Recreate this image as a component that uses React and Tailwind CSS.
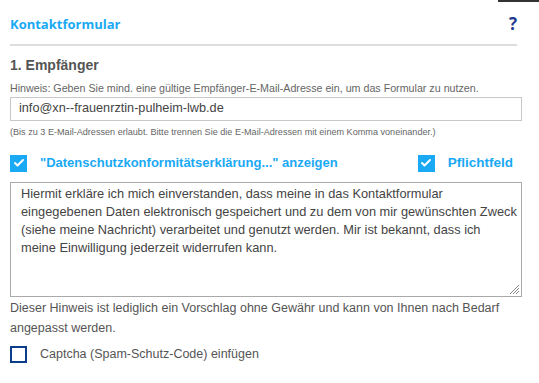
import { Check } from "lucide-react";

function Box({ checked }) {
  if (checked) {
    return (
      <span className="flex h-[17px] w-[17px] shrink-0 items-center justify-center bg-[#1aa9f5]">
        <Check className="h-3 w-3 text-white" strokeWidth={4} />
      </span>
    );
  }
  return <span className="h-[17px] w-[17px] shrink-0 border-2 border-[#0b3d8c] bg-white" />;
}

export default function App() {
  return (
    <div className="relative min-h-screen bg-white px-[10px] pt-[14px] font-['Liberation_Sans',Arial,sans-serif] text-[#555]">
      <div className="absolute right-0 top-0 h-[2px] w-[41px] bg-[#333]" />
      <div className="mr-[12px] flex items-center justify-between border-b-2 border-[#dddddd] pb-[10px]">
        <h1 className="font-['Open_Sans',sans-serif] text-[13px] font-bold leading-[20px] text-[#1aa9f5]">
          Kontaktformular
        </h1>
        <span className="font-['Open_Sans',sans-serif] text-[17px] font-bold leading-[20px] text-[#1b3c8c]">?</span>
      </div>

      <h2 className="mt-[11px] text-[14px] font-bold leading-[16px] text-[#555]">1. Empfänger</h2>
      <p className="mt-[8px] text-[10.7px] leading-[14px] text-[#666]">
        Hinweis: Geben Sie mind. eine gültige Empfänger-E-Mail-Adresse ein, um das Formular zu nutzen.
      </p>
      <div className="mr-[7px] mt-[2px] flex h-[24px] items-center border border-[#c8c8c8] px-[8px] text-[12.7px] text-[#444]">
        info@xn--frauenrztin-pulheim-lwb.de
      </div>
      <p className="mt-[5px] text-[9.1px] leading-[12px] text-[#666]">
        (Bis zu 3 E-Mail-Adressen erlaubt. Bitte trennen Sie die E-Mail-Adressen mit einem Komma voneinander.)
      </p>

      <div className="mt-[15px] flex items-center text-[13px] font-bold text-[#1aa9f5]">
        <div className="flex items-center gap-[13px]">
          <Box checked />
          <span>"Datenschutzkonformitätserklärung..." anzeigen</span>
        </div>
        <div className="ml-[80px] flex items-center gap-[13px]">
          <Box checked />
          <span className="text-[13.5px]">Pflichtfeld</span>
        </div>
      </div>

      <div className="relative mr-[7px] mt-[9px] h-[115px] whitespace-nowrap border border-[#aaa] px-[10px] pt-[2px] text-[12.8px] leading-[18px] text-[#444]">
        Hiermit erkläre ich mich einverstanden, dass meine in das Kontaktformular
        <br />
        eingegebenen Daten elektronisch gespeichert und zu dem von mir gewünschten Zweck
        <br />
        (siehe meine Nachricht) verarbeitet und genutzt werden. Mir ist bekannt, dass ich
        <br />
        meine Einwilligung jederzeit widerrufen kann.
        <svg className="absolute bottom-[1px] right-[1px]" width="12" height="12" viewBox="0 0 12 12">
          <path d="M11 2L2 11M11 5L5 11M11 8L8 11" stroke="#888" strokeWidth="1" fill="none" />
        </svg>
      </div>
      <p className="mt-[1px] pr-[20px] text-[12.5px] leading-[20px] text-[#555]">
        Dieser Hinweis ist lediglich ein Vorschlag ohne Gewähr und kann von Ihnen nach Bedarf angepasst werden.
      </p>

      <div className="mt-[7px] flex items-center gap-[13px] text-[12.5px] text-[#555]">
        <Box />
        <span>Captcha (Spam-Schutz-Code) einfügen</span>
      </div>
    </div>
  );
}
